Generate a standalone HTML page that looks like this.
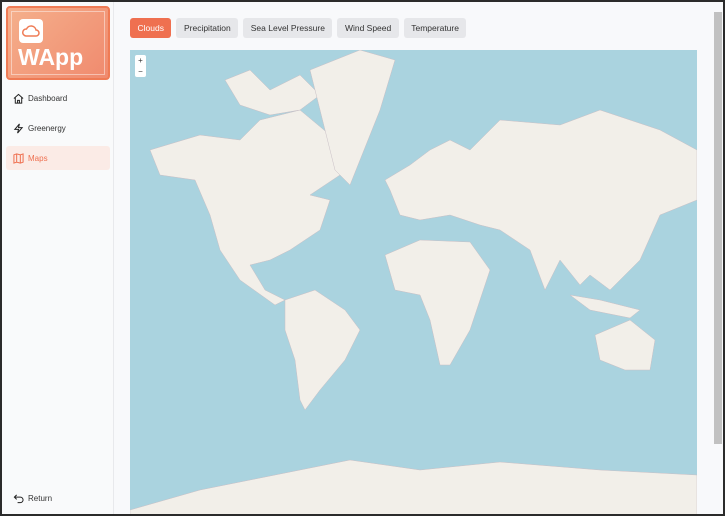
<!DOCTYPE html>
<html><head><meta charset="utf-8"><style>
*{box-sizing:border-box;margin:0;padding:0}
body{width:725px;height:516px;overflow:hidden;background:#2b2b2b;font-family:"Liberation Sans",sans-serif;position:relative}
.win{position:absolute;left:2px;top:2px;width:721px;height:512px;background:#f8f9fb;overflow:hidden}
.side{position:absolute;left:0;top:0;width:112px;height:512px;border-right:1px solid #e8e9ec;background:#f9fafb}
.logo{position:absolute;left:4px;top:4px;width:104px;height:74px;border-radius:4px;background:linear-gradient(135deg,#f5b08c,#f08a6e);border:2px solid #ef7b55}
.logo .in{position:absolute;left:3px;top:3px;right:3px;bottom:3px;border:1px solid rgba(255,255,255,.45)}
.logo .ic{position:absolute;left:11px;top:11px;width:24px;height:24px;background:#fff;border-radius:4px}
.logo .t{position:absolute;left:10px;top:36px;color:#fff;font-weight:bold;font-size:23px}
.nav{position:absolute;left:4px;width:104px;height:24px;font-size:8px;color:#333;display:flex;align-items:center;padding-left:7px;border-radius:3px}
.nav svg{margin-right:4px}
.nav.act{background:#fbebe6;color:#ef7050}
.tabs{position:absolute;left:128px;top:16px;display:flex;gap:5px}
.tab{height:20px;padding:0 7.5px;font-size:8.5px;line-height:20px;background:#e6e7ea;color:#333;border-radius:3px}
.tab.a{background:#ef7050;color:#fff}
.map{position:absolute;left:128px;top:48px;width:567px;height:466px;background:#aad3df;overflow:hidden}
.zc{position:absolute;left:5px;top:5px;width:11px;background:#fff;border-radius:2px;font-size:8px;text-align:center;line-height:11px;color:#333}
.sb{position:absolute;left:712px;top:10px;width:8px;height:432px;background:#c1c1c1}
</style></head><body><div class="win">
<div class="side">
<div class="logo"><div class="in"></div><div class="ic"><svg width="24" height="24" viewBox="0 0 24 24"><path d="M7 17h10a3 3 0 0 0 0-6 5 5 0 0 0-9.5-1A3.5 3.5 0 0 0 7 17z" fill="none" stroke="#ef7b55" stroke-width="1.5"/></svg></div><div class="t">WApp</div></div>
<div class="nav" style="top:84px"><svg width="11" height="11" viewBox="0 0 12 12"><path d="M1 6L6 1.5 11 6M2.5 5v6h7V5M5 11V8h2v3" fill="none" stroke="#222" stroke-width="1.1"/></svg>Dashboard</div>
<div class="nav" style="top:114px"><svg width="11" height="11" viewBox="0 0 12 12"><path d="M7 1L2 7h4l-1 4 5-6H6z" fill="none" stroke="#222" stroke-width="1.1"/></svg>Greenergy</div>
<div class="nav act" style="top:144px"><svg width="11" height="11" viewBox="0 0 12 12"><path d="M1 2l3-1 4 1 3-1v9l-3 1-4-1-3 1zM4 1v9M8 2v9" fill="none" stroke="#ef7050" stroke-width="1.1"/></svg>Maps</div>
<div class="nav" style="top:484px"><svg width="11" height="11" viewBox="0 0 12 12"><path d="M4 2L1.5 4.5 4 7M1.5 4.5H8a3 3 0 0 1 0 6H5" fill="none" stroke="#222" stroke-width="1.1"/></svg>Return</div>
</div>
<div class="tabs"><div class="tab a">Clouds</div><div class="tab">Precipitation</div><div class="tab">Sea Level Pressure</div><div class="tab">Wind Speed</div><div class="tab">Temperature</div></div>
<div class="map">
<svg width="567" height="466" viewBox="130 50 567 466" style="position:absolute;left:0;top:0" fill="#f2efe9" stroke="#c9bfc5" stroke-width=".5">
<path d="M150 150L200 135 240 140 260 120 300 110 330 135 340 175 310 195 330 200 320 230 290 250 270 260 250 265 265 290 285 300 275 305 240 280 220 250 210 215 195 180 160 175z"/>
<path d="M225 80L250 70 270 90 300 75 320 95 300 110 270 115 240 105z"/>
<path d="M310 70L360 50 395 60 380 110 350 185 335 170 320 110z"/>
<path d="M285 300L315 290 345 310 360 330 345 360 320 390 305 410 300 400 295 360 285 330z"/>
<path d="M385 180L410 165 430 150 450 140 470 150 500 120 560 125 600 110 660 130 697 150 697 200 660 215 640 260 610 290 590 275 580 285 560 260 545 290 530 250 500 230 480 225 450 215 420 220 400 215 390 190z"/>
<path d="M385 255L420 240 470 242 490 270 480 300 470 330 450 365 440 365 430 320 420 295 395 290z"/>
<path d="M595 335L630 320 655 340 650 370 625 370 600 360z"/>
<path d="M570 295L600 300 640 310 630 318 590 310z"/>
<path d="M130 510L200 490 300 470 350 460 420 470 500 462 600 470 697 475 697 520 130 520z"/>
</svg>
<div class="zc">+<br>−</div>
</div>
<div class="sb"></div>
</div></body></html>
